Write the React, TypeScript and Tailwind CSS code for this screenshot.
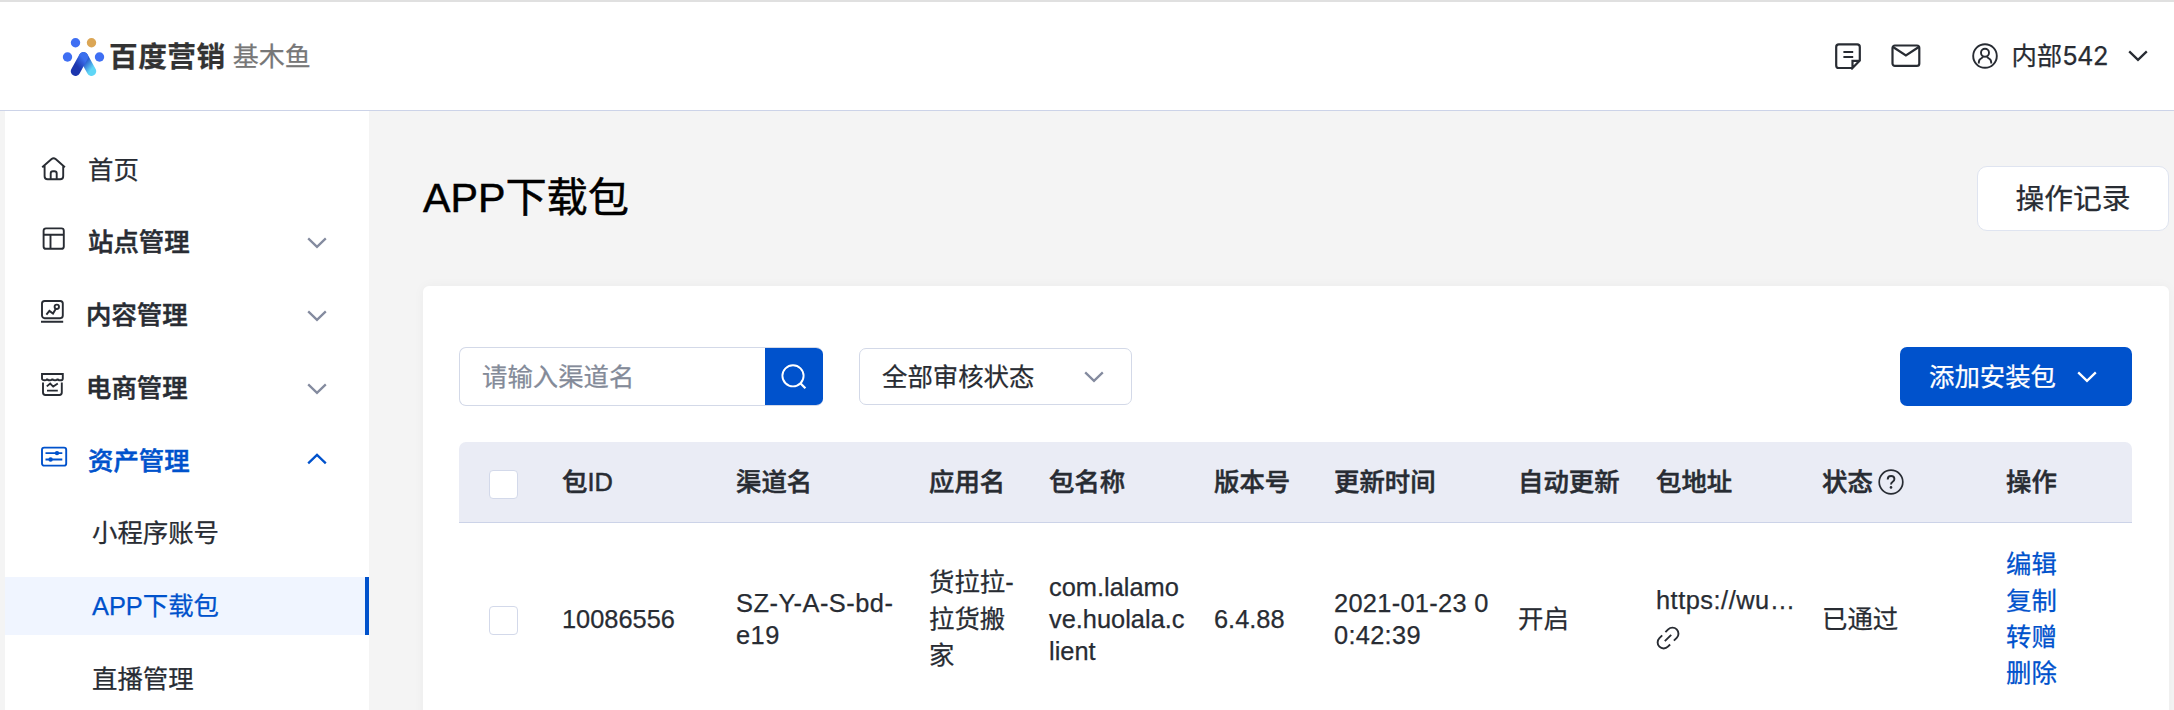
import type { ReactNode } from "react";

type IconProps = { className?: string };

const Chevron = ({ className = "", up = false }: IconProps & { up?: boolean }) => (
  <svg
    width="20"
    height="12"
    viewBox="0 0 20 12"
    fill="none"
    stroke="currentColor"
    strokeWidth="2.3"
    className={`shrink-0 ${className}`}
  >
    <path d={up ? "M1.2 10.4 10 1.9l8.8 8.5" : "M1.2 1.4 10 9.9l8.8-8.5"} />
  </svg>
);

const MenuSvg = ({ children }: { children: ReactNode }) => (
  <svg width="27" height="27" viewBox="0 0 27 27" fill="none" stroke="currentColor" strokeWidth="1.9">
    {children}
  </svg>
);

const HomeIcon = () => (
  <MenuSvg>
    <path d="M1.2 11.2 10.6 3q2-1.7 4 0l9.3 8.2M3.6 9.4v10.8q0 3 3 3h12.6q3 0 3-3V9.4" />
    <path d="M9.7 23v-5.4q0-2.3 2.3-2.3h1.4q2.3 0 2.3 2.3V23" />
  </MenuSvg>
);

const SiteIcon = () => (
  <MenuSvg>
    <rect x="2.6" y="2.4" width="20.2" height="20.4" rx="2.4" />
    <path d="M2.6 8.7h20.2M9.5 8.7v14" />
  </MenuSvg>
);

const ContentIcon = () => (
  <MenuSvg>
    <rect x="1" y="2" width="20.8" height="17.2" rx="2.6" />
    <path d="M0 22.7h22.2M5.4 15.6l3-3.7 3.6 2.6 3-5.1" />
    <circle cx="15.8" cy="7.8" r="2.2" />
  </MenuSvg>
);

const ShopIcon = () => (
  <MenuSvg>
    <path d="M1 2h20.8v4.4q0 1.9-2.6 1.9T16.6 6.5q0 1.8-2.6 1.8t-2.6-1.8q0 1.8-2.6 1.8T6.2 6.500q0 1.800-2.600 1.800T1 6.400z" />
    <path d="M2 10.400v10.200q0 2.400 2.400 2.400h14q2.400 0 2.400-2.400V10.400M5.800 14.400l3.400-2.900 3 3.100 4.600-3.100M6 18.600h10.800" />
  </MenuSvg>
);

const AssetIcon = () => (
  <MenuSvg>
    <rect x="1" y="2.600" width="24.200" height="18" rx="2.200" />
    <path d="M4.500 8.100h16.800M4.500 14.500h16.800" />
    <g fill="currentColor" stroke="none">
      <circle cx="16" cy="8.100" r="2.200" />
      <circle cx="9.600" cy="14.500" r="2.200" />
    </g>
  </MenuSvg>
);

const Logo = () => (
  <svg width="43" height="40" viewBox="62 37 43 40">
    <defs>
      <linearGradient id="legLeft" x1="0.8" y1="0" x2="0.2" y2="0.9">
        <stop offset="0" stopColor="#3b70ee" />
        <stop offset="0.8" stopColor="#1c36ae" />
      </linearGradient>
      <linearGradient id="legRight" x1="0.2" y1="0.1" x2="0.8" y2="1">
        <stop offset="0.2" stopColor="#2a59cf" />
        <stop offset="1" stopColor="#5fd6f6" />
      </linearGradient>
    </defs>
    <circle cx="75.5" cy="42.700" r="4.700" fill="#3f6ff3" />
    <circle cx="91.500" cy="42.700" r="4.700" fill="#dba655" />
    <circle cx="67.500" cy="57" r="4.700" fill="#3f6ff3" />
    <circle cx="99.500" cy="57" r="4.700" fill="#3f6ff3" />
    <path d="M83.500 56.800 91.500 71.200" stroke="url(#legRight)" strokeWidth="9.400" strokeLinecap="round" />
    <path d="M83.500 56.800 75.500 71.200" stroke="url(#legLeft)" strokeWidth="9.400" strokeLinecap="round" />
  </svg>
);

const NoteIcon = () => (
  <svg width="26" height="27" viewBox="0 0 26 27" fill="none" stroke="currentColor" strokeWidth="2.200">
    <path d="M17.500 25H3.800Q1.200 25 1.200 22.400V4Q1.200 1.400 3.800 1.400h18.400q2.600 0 2.600 2.600v13.600L17.500 25v-7.200h7.300" />
    <path d="M8.400 9h9.800M8.400 14h9.800" />
  </svg>
);

const MailIcon = () => (
  <svg width="30" height="24" viewBox="0 0 30 24" fill="none" stroke="currentColor" strokeWidth="2.200">
    <rect x="1.500" y="1.500" width="26.800" height="20.400" rx="2.400" />
    <path d="m2 3 12.900 8.500L27.800 3" />
  </svg>
);

const UserIcon = () => (
  <svg width="26" height="26" viewBox="0 0 26 26" fill="none" stroke="currentColor" strokeWidth="1.900">
    <circle cx="13" cy="13" r="11.800" />
    <circle cx="13" cy="9.800" r="4" />
    <path d="M6.800 20.400v-1.200q0-2.800 3-4.200l1.400-1.400M19.200 20.400v-1.200q0-2.800-3-4.200l-1.400-1.400" />
  </svg>
);

const SearchIcon = () => (
  <svg width="26" height="26" viewBox="0 0 26 26" fill="none" stroke="currentColor" strokeWidth="1.900">
    <circle cx="12" cy="11.800" r="10.600" />
    <path d="m19.400 19.200 5 5" strokeWidth="2.300" />
  </svg>
);

const HelpIcon = () => (
  <svg width="26" height="26" viewBox="0 0 26 26" fill="none" stroke="currentColor" strokeWidth="1.700">
    <circle cx="13" cy="13" r="11.800" />
    <path d="M9.700 10.400q0-3.400 3.400-3.400 3.300 0 3.300 3 0 1.600-1.700 2.700T13 15.600" strokeWidth="1.900" />
    <circle cx="13" cy="18.400" r="1.300" fill="currentColor" stroke="none" />
  </svg>
);

const LinkIcon = () => (
  <svg width="24" height="24" viewBox="0 0 24 24" fill="none" stroke="currentColor" strokeWidth="1.900">
    <path d="M9.400 6.200l2.800-2.800a6 6 0 0 1 8.500 8.500l-2.800 2.800M6.200 9.400 3.400 12.200a6 6 0 0 0 8.500 8.500l2.200-2.200M8.800 15.200l6.400-6.400" />
  </svg>
);

const menus = [
  { label: "首页", icon: <HomeIcon />, leaf: true, gap: "ml-[20px]" },
  { label: "站点管理", icon: <SiteIcon />, gap: "ml-[20px]" },
  { label: "内容管理", icon: <ContentIcon />, gap: "ml-[18px]" },
  { label: "电商管理", icon: <ShopIcon />, gap: "ml-[18px]" },
  { label: "资产管理", icon: <AssetIcon />, open: true, gap: "ml-[20px]" },
];

const subMenus = [
  { label: "小程序账号" },
  { label: "APP下载包", active: true },
  { label: "直播管理" },
];

// every column starts at the left edge of its text
const columns =
  "grid grid-cols-[73px_174px_193px_120px_165px_120px_184px_138px_166px_184px_1fr] pl-[30px]";

const headers = ["包ID", "渠道名", "应用名", "包名称", "版本号", "更新时间", "自动更新", "包地址"];

const Checkbox = () => (
  <span className="block h-[29px] w-[29px] rounded-[4px] border border-[#d3d9ea] bg-white" />
);

function Header() {
  return (
    <header className="flex h-[111px] shrink-0 items-center border-t-2 border-b border-t-[#e0e0e0] border-b-[#ccd3e8] bg-white pl-[62px] pr-[26px]">
      <div className="flex items-center pt-[2px]">
        <Logo />
        <span className="ml-[4px] text-[28.700px] leading-[40px] font-bold tracking-[0.5px] text-[#333]">
          百度营销
        </span>
        <span className="ml-[7px] text-[26px] leading-[40px] text-[#777]">基木鱼</span>
      </div>
      <div className="ml-auto flex items-center text-[#282c33]">
        <NoteIcon />
        <span className="ml-[30px]">
          <MailIcon />
        </span>
        <span className="ml-[51px]">
          <UserIcon />
        </span>
        <span className="ml-[13px] leading-[40px]">
          内部<span className="font-[Inter] tracking-[-0.5px]">542</span>
        </span>
        <Chevron className="ml-[20px]" />
      </div>
    </header>
  );
}

function Sidebar() {
  return (
    <aside className="ml-[5px] w-[364px] shrink-0 bg-white pt-[22px]">
      {menus.map((menu) => (
        <div
          key={menu.label}
          className={`flex h-[73px] items-center pl-[36px] pr-[42px] ${menu.open ? "text-[#0052cc]" : "text-[#282c33]"}`}
        >
          <span className={menu.leaf ? "" : "mb-[6px]"}>{menu.icon}</span>
          <span
            className={`${menu.gap} ${menu.leaf ? "" : "mb-[2px] font-medium [-webkit-text-stroke:0.5px]"}`}
          >
            {menu.label}
          </span>
          {!menu.leaf && (
            <Chevron up={menu.open} className={`ml-auto ${menu.open ? "mb-[6px]" : "text-[#848b9f]"}`} />
          )}
        </div>
      ))}
      <div className="mt-[6px] flex flex-col gap-[15px]">
        {subMenus.map((item) => (
          <div
            key={item.label}
            className={`flex h-[58px] items-center border-r-4 pl-[87px] ${
              item.active ? "border-[#0052cc] bg-[#f0f5ff] text-[#0052cc]" : "border-transparent"
            }`}
          >
            {item.label}
          </div>
        ))}
      </div>
    </aside>
  );
}

function Toolbar() {
  return (
    <div className="flex h-[59px] items-center">
      <div className="flex h-[59px] w-[364px] overflow-hidden rounded-[7px] border border-r-0 border-[#d3d9e8]">
        <div className="flex flex-1 items-center pl-[22px] text-[#848b99]">请输入渠道名</div>
        <button className="flex w-[58px] items-center justify-center bg-[#0052cc] text-white">
          <SearchIcon />
        </button>
      </div>
      <div className="ml-[36px] flex h-[57px] w-[273px] items-center rounded-[7px] border border-[#d3d9e8] pl-[22px] pr-[27px]">
        全部审核状态
        <Chevron className="ml-auto text-[#848b9f]" />
      </div>
      <button className="ml-auto flex h-[59px] w-[232px] items-center rounded-[7px] bg-[#0052cc] pl-[29px] text-white">
        添加安装包
        <Chevron className="ml-[21px]" />
      </button>
    </div>
  );
}

function PackageTable() {
  return (
    <div className="mt-[36px]">
      <div
        className={`${columns} h-[81px] items-center rounded-t-[7px] border-b border-[#ccd3e8] bg-[#eaecf5] font-medium [-webkit-text-stroke:0.5px]`}
      >
        <div className="pt-[5px]">
          <Checkbox />
        </div>
        {headers.map((label) => (
          <div key={label}>{label}</div>
        ))}
        <div className="flex items-center gap-[5px]">
          状态
          <HelpIcon />
        </div>
        <div>操作</div>
      </div>
      <div className={`${columns} h-[192px] items-center leading-[32px]`}>
        <div className="pt-[3px]">
          <Checkbox />
        </div>
        <div>10086556</div>
        <div className="tracking-[0.5px]">
          SZ-Y-A-S-bd-
          <br />
          e19
        </div>
        <div className="leading-[36.400px]">
          货拉拉-
          <br />
          拉货搬
          <br />家
        </div>
        <div>
          com.lalamo
          <br />
          ve.huolala.c
          <br />
          lient
        </div>
        <div>6.4.88</div>
        <div className="tracking-[0.3px]">
          2021-01-23 0
          <br />
          0:42:39
        </div>
        <div>开启</div>
        <div className="pb-[5px] tracking-[0.5px]">
          https://wu…
          <span className="mt-[10px] block h-[24px]">
            <LinkIcon />
          </span>
        </div>
        <div>已通过</div>
        <div className="flex flex-col leading-[36.400px] text-[#0052cc]">
          <a>编辑</a>
          <a>复制</a>
          <a>转赠</a>
          <a>删除</a>
        </div>
      </div>
    </div>
  );
}

export default function App() {
  return (
    <div className="flex h-[710px] w-[2174px] flex-col overflow-hidden bg-[#f4f4f4] font-['Liberation_Sans','Noto_Sans_CJK_SC',sans-serif] text-[25.4px] leading-[36px] whitespace-nowrap text-[#282c33] [-webkit-text-stroke:0.25px]">
      <Header />
      <div className="flex min-h-0 flex-1">
        <Sidebar />
        <main className="flex flex-1 flex-col pl-[54px] pr-[5px] pt-[55px]">
          <div className="flex h-[65px] shrink-0 items-center justify-between">
            <h1 className="pb-[2px] text-[41.200px] leading-[60px] text-black [-webkit-text-stroke:0.5px]">
              APP下载包
            </h1>
            <button className="h-[65px] w-[192px] rounded-[10px] border border-[#dfe4f0] bg-white text-[28.800px]">
              操作记录
            </button>
          </div>
          <section className="mt-[55px] h-[520px] shrink-0 rounded-[6px] bg-white pl-[36px] pr-[37px] pt-[61px] shadow-[0_0_12px_rgba(0,0,0,0.04)]">
            <Toolbar />
            <PackageTable />
          </section>
        </main>
      </div>
    </div>
  );
}
